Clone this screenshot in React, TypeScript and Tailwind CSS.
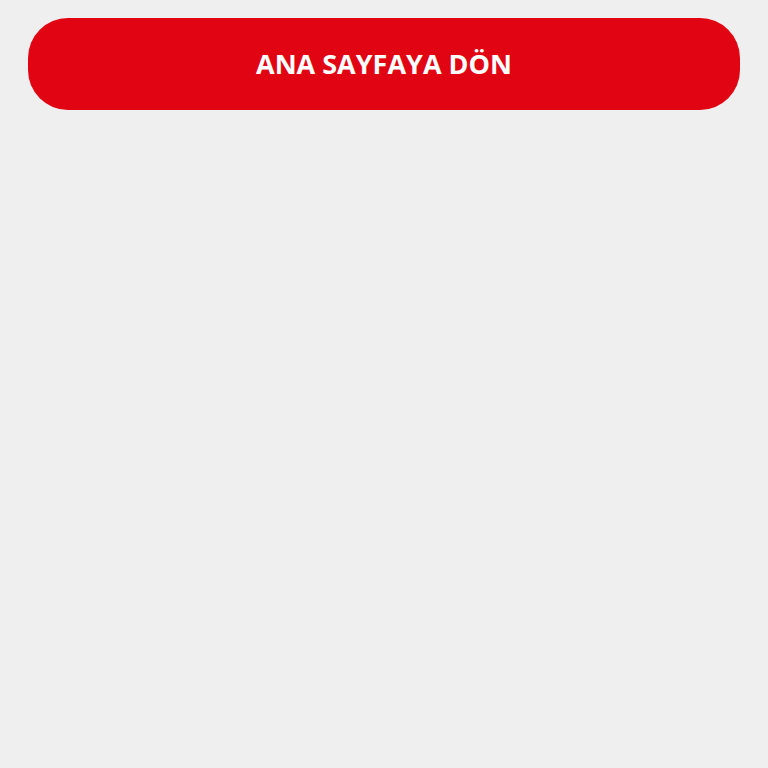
export default function App() {
  return (
    <div className="min-h-screen w-full bg-[#efeff0] px-[28px] pt-[18px]">
      <button className="flex h-[92px] w-full items-center justify-center rounded-[40px] bg-[#e10413] text-[27px] font-bold text-white [font-family:'Open_Sans',sans-serif]">
        ANA SAYFAYA DÖN
      </button>
    </div>
  );
}
